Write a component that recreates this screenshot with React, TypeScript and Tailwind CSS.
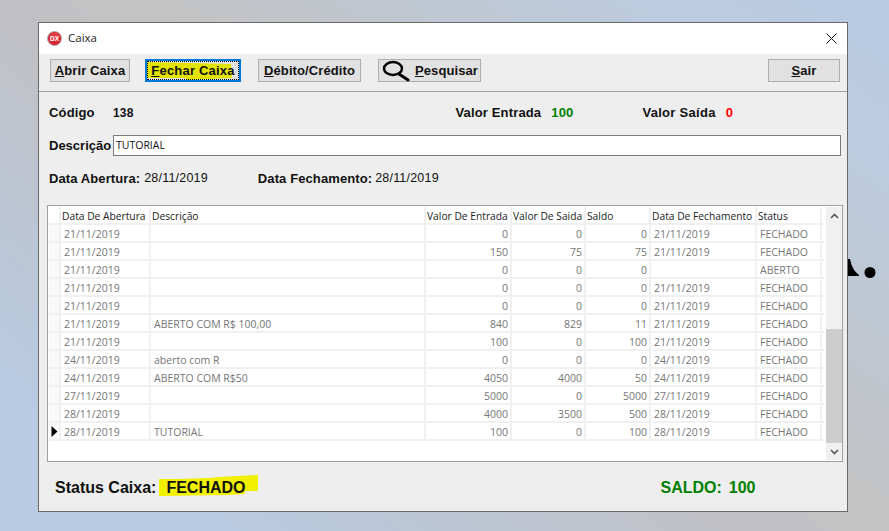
const rows = [
  ["21/11/2019", "", "0", "0", "0", "21/11/2019", "FECHADO"],
  ["21/11/2019", "", "150", "75", "75", "21/11/2019", "FECHADO"],
  ["21/11/2019", "", "0", "0", "0", "", "ABERTO"],
  ["21/11/2019", "", "0", "0", "0", "21/11/2019", "FECHADO"],
  ["21/11/2019", "", "0", "0", "0", "21/11/2019", "FECHADO"],
  ["21/11/2019", "ABERTO COM R$ 100,00", "840", "829", "11", "21/11/2019", "FECHADO"],
  ["21/11/2019", "", "100", "0", "100", "21/11/2019", "FECHADO"],
  ["24/11/2019", "aberto com R", "0", "0", "0", "24/11/2019", "FECHADO"],
  ["24/11/2019", "ABERTO COM R$50", "4050", "4000", "50", "24/11/2019", "FECHADO"],
  ["27/11/2019", "", "5000", "0", "5000", "27/11/2019", "FECHADO"],
  ["28/11/2019", "", "4000", "3500", "500", "28/11/2019", "FECHADO"],
  ["28/11/2019", "TUTORIAL", "100", "0", "100", "28/11/2019", "FECHADO"],
];
const headers = ["Data De Abertura", "Descrição", "Valor De Entrada", "Valor De Saida", "Saldo", "Data De Fechamento", "Status"];
const cols = "grid-cols-[12px_90px_275px_86px_74px_65px_106px_65px]";

function Btn({ k, rest, className, children }: { k: string; rest: string; className: string; children?: React.ReactNode }) {
  return (
    <div className={"h-[23px] border border-[#adadad] bg-[#e1e1e1] flex items-center justify-center text-[13px] font-bold text-[#111] " + className}>
      {children}
      <span className="tracking-[0.1px]"><span className="underline">{k}</span>{rest}</span>
    </div>
  );
}

export default function App() {
  return (
    <div className="relative w-[889px] h-[531px] overflow-hidden pl-[38px] pt-[22px] font-['Liberation_Sans',sans-serif]">
      <div className="absolute inset-0 bg-[linear-gradient(35deg,#b8cbe3_0%,#b8cbe3_12%,#c0c0c4_45%,#c3c3c3_55%,#bccbdf_85%,#b8cbe3_100%)]" />
      {/* stray letter fragment behind the window */}
      <svg className="absolute left-[846px] top-[255px]" width="32" height="24" viewBox="0 0 32 24">
        <path d="M0 4 L4 4 Q6 15 13 20 L13 21 L0 21 Z" fill="#000" />
        <circle cx="24" cy="17.5" r="5.5" fill="#000" />
      </svg>

      <div className="relative w-[810px] h-[490px] border border-[#696969] bg-[#eeeeee] flex flex-col">
        {/* title bar */}
        <div className="h-[31px] bg-white flex items-center pl-[8px] pr-[10px] shrink-0">
          <svg width="15" height="15" viewBox="0 0 15 15" className="mb-[1px]">
            <circle cx="7.5" cy="7.5" r="7" fill="#d8232f" stroke="#b0b0b0" strokeWidth="1" />
            <circle cx="7.5" cy="6" r="5" fill="#e8525c" opacity="0.5" />
            <text x="7.5" y="9.6" textAnchor="middle" fontSize="6.5" fontWeight="700" fill="#fff" fontFamily="Liberation Sans">DX</text>
          </svg>
          <span className="ml-[6px] mb-[1px] text-[11.5px] text-[#222] font-['Open_Sans',sans-serif]">Caixa</span>
          <svg className="ml-auto mb-[1px]" width="11" height="11" viewBox="0 0 11 11">
            <path d="M0.5 0.5 L10.5 10.5 M10.5 0.5 L0.5 10.5" stroke="#111" strokeWidth="1" />
          </svg>
        </div>

        {/* toolbar */}
        <div className="h-[38px] border-b border-[#a0a0a0] flex items-start pt-[5px] pl-[11px] pr-[7px] shrink-0">
          <Btn k="A" rest="brir Caixa" className="w-[80px]" />
          <div className="relative ml-[15px] w-[96px] h-[23px] border-2 border-[#0078d7] bg-[#e1e1e1]">
            <svg className="absolute left-0 top-0" width="92" height="19" viewBox="0 0 92 19">
              <path d="M0 1 L84 3 L85 17 L40 19 L38 17 L0 17 Z" fill="#e3e300" />
            </svg>
            <div className="absolute inset-0 border border-dotted border-black" />
            <div className="relative h-full flex items-center justify-center text-[13px] font-bold text-[#111] tracking-[0.2px]">
              <span><span className="underline">F</span>echar Caixa</span>
            </div>
          </div>
          <Btn k="D" rest="ébito/Crédito" className="ml-[17px] w-[103px]" />
          <Btn k="P" rest="esquisar" className="ml-[17px] w-[103px] gap-[3px] pl-[1px]">
            <svg width="30" height="22" viewBox="0 0 30 22">
              <ellipse cx="11" cy="8.5" rx="9" ry="6.5" fill="none" stroke="#000" strokeWidth="2.4" />
              <path d="M17 14 L26 20" stroke="#000" strokeWidth="3" strokeLinecap="round" />
            </svg>
          </Btn>
          <Btn k="S" rest="air" className="ml-auto w-[72px]" />
        </div>

        {/* info rows */}
        <div className="h-[43px] flex items-center pl-[10px] pb-[1px] text-[13px] font-bold text-[#111] tracking-[0.15px] shrink-0">
          <span className="w-[64px]">Código</span>
          <span className="text-[12px]">138</span>
          <span className="ml-[322px]">Valor Entrada</span>
          <span className="ml-[10px] text-[#008000]">100</span>
          <span className="ml-[69px] tracking-[0.3px]">Valor Saída</span>
          <span className="ml-[10px] text-[#ff0000]">0</span>
        </div>
        <div className="h-[21px] flex items-center pl-[10px] pr-[6px] shrink-0">
          <span className="w-[64px] text-[13px] font-bold text-[#111]">Descrição</span>
          <div className="flex-1 h-[21px] bg-white border border-[#7a7a7a] flex items-center pl-[2px] text-[10.5px] text-[#111] font-['Open_Sans',sans-serif]">TUTORIAL</div>
        </div>
        <div className="h-[44px] flex items-center pl-[10px] pt-[1px] text-[13px] text-[#111] shrink-0">
          <span className="font-bold tracking-[0.1px]">Data Abertura:</span>
          <span className="ml-[4px] text-[12.5px] tracking-[0.2px]">28/11/2019</span>
          <span className="ml-[50px] font-bold tracking-[0.1px]">Data Fechamento:</span>
          <span className="ml-[3px] text-[12.5px] tracking-[0.2px]">28/11/2019</span>
        </div>

        {/* grid */}
        <div className="mt-[5px] ml-[8px] w-[796px] h-[257px] bg-white border border-[#a0a0a0] flex shrink-0 font-['Open_Sans',sans-serif] text-[10.5px]">
          <div className="w-[776px] pl-[1px] pt-[1px] shrink-0">
            <div className={"grid h-[18px] border-b-2 border-[#f0f0f0] text-[#222] text-[10.25px] " + cols}>
              <div className="border-r-2 border-[#f0f0f0]" />
              {headers.map((h) => (
                <div key={h} className="border-r-2 border-[#f0f0f0] pl-[1px] leading-[19px] whitespace-nowrap overflow-hidden">{h}</div>
              ))}
            </div>
            {rows.map((r, i) => (
              <div key={i} className={"grid h-[18px] border-b-2 border-[#f0f0f0] text-[#767676] leading-[19px] " + cols}>
                <div className="border-r-2 border-[#f0f0f0] bg-[#f9f9f9] flex items-center justify-center">
                  {i === rows.length - 1 && (
                    <svg width="7" height="11" viewBox="0 0 7 11"><path d="M0.5 0 L6.5 5.5 L0.5 11 Z" fill="#000" /></svg>
                  )}
                </div>
                {r.map((c, j) => (
                  <div key={j} className={"border-r-2 border-[#f0f0f0] whitespace-nowrap overflow-hidden " + (j >= 2 && j <= 4 ? "text-right pr-[2px]" : "pl-[3px]")}>{c}</div>
                ))}
              </div>
            ))}
          </div>
          <div className="ml-[2px] my-[1px] w-[16px] bg-[#f0f0f0] flex flex-col">
            <div className="h-[17px] flex items-center justify-center">
              <svg width="9" height="6" viewBox="0 0 9 6"><path d="M1 5 L4.5 1.5 L8 5" fill="none" stroke="#555" strokeWidth="1.6" /></svg>
            </div>
            <div className="h-[105px]" />
            <div className="h-[114px] bg-[#cdcdcd]" />
            <div className="flex-1 flex items-center justify-center">
              <svg width="9" height="6" viewBox="0 0 9 6"><path d="M1 1 L4.5 4.5 L8 1" fill="none" stroke="#555" strokeWidth="1.6" /></svg>
            </div>
          </div>
        </div>

        {/* footer */}
        <div className="flex-1 flex items-center pl-[16px] pt-[3px] text-[16px] font-bold text-[#111]">
          <span>Status Caixa:</span>
          <div className="relative ml-[10px]">
            <svg className="absolute -left-[7px] -top-[1px]" width="99" height="22" viewBox="0 0 99 22">
              <path d="M0 4 L20 4 L50 3 L60 2 L99 0 L99 16 L86 16 L86 19 L69 20 L0 21 Z" fill="#f0f000" />
            </svg>
            <span className="relative">FECHADO</span>
          </div>
          <span className="ml-[415px] text-[#008000]">SALDO:</span>
          <span className="ml-[7px] text-[#008000]">100</span>
        </div>
      </div>
    </div>
  );
}
